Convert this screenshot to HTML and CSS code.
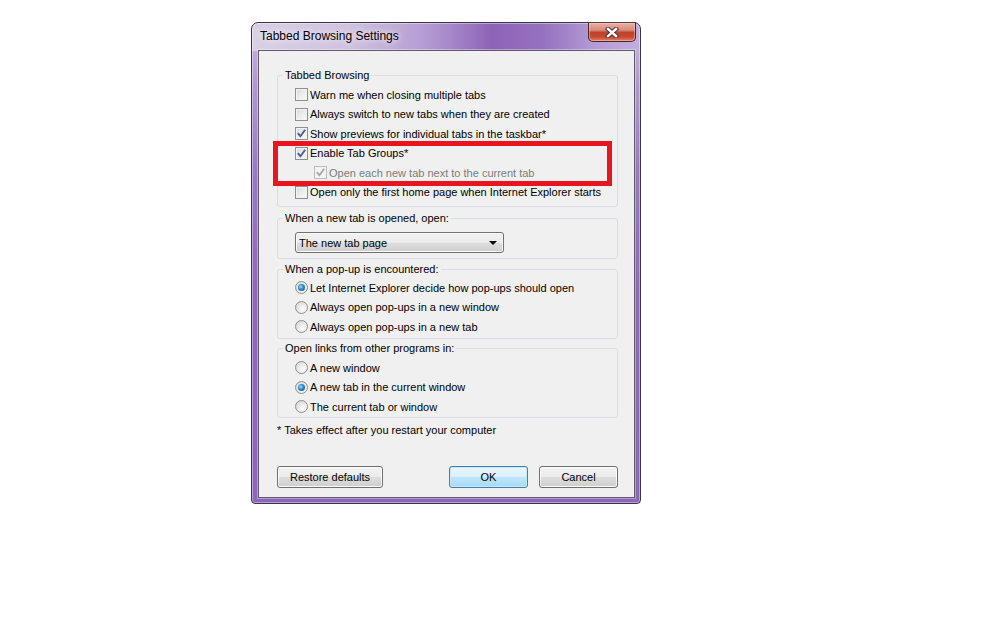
FILE: index.html
```html
<!DOCTYPE html>
<html lang="en">
<head>
    <meta charset="UTF-8">
    <meta name="viewport" content="width=device-width, initial-scale=1.0">
    <title>Tabbed Browsing Settings</title>
    <link rel="stylesheet" href="styles.css">
</head>
<body>
    <div class="window">
        <div class="titlebar">
            <span class="title">Tabbed Browsing Settings</span>
            <button class="close" aria-label="Close">
                <svg width="14" height="11" viewBox="0 0 14 11">
                    <path d="M3 2 L11 9 M11 2 L3 9" stroke="#4a3434" stroke-width="4.4" stroke-linecap="square"/>
                    <path d="M3 2 L11 9 M11 2 L3 9" stroke="#fff" stroke-width="2.4" stroke-linecap="square"/>
                </svg>
            </button>
        </div>

        <div class="client">
            <fieldset class="group group-tabs">
                <legend>Tabbed Browsing</legend>
                <div class="options">
                    <label class="option"><span class="check"></span>Warn me when closing multiple tabs</label>
                    <label class="option"><span class="check"></span>Always switch to new tabs when they are created</label>
                    <label class="option"><span class="check checked"><svg viewBox="0 0 11 11"><path d="M1.8 5.2 L4.4 8.2 L9.2 1.8"/></svg></span>Show previews for individual tabs in the taskbar*</label>
                    <div class="highlighted">
                        <label class="option"><span class="check checked"><svg viewBox="0 0 11 11"><path d="M1.8 5.2 L4.4 8.2 L9.2 1.8"/></svg></span>Enable Tab Groups*</label>
                        <label class="option sub disabled"><span class="check checked"><svg viewBox="0 0 11 11"><path d="M1.8 5.2 L4.4 8.2 L9.2 1.8"/></svg></span>Open each new tab next to the current tab</label>
                        <div class="redbox"></div>
                    </div>
                    <label class="option"><span class="check"></span>Open only the first home page when Internet Explorer starts</label>
                </div>
            </fieldset>

            <fieldset class="group group-newtab">
                <legend>When a new tab is opened, open:</legend>
                <div class="options">
                    <div class="select">
                        <span>The new tab page</span>
                        <span class="arrow"></span>
                    </div>
                </div>
            </fieldset>

            <fieldset class="group group-popup">
                <legend>When a pop-up is encountered:</legend>
                <div class="options">
                    <label class="option"><span class="radio selected"></span>Let Internet Explorer decide how pop-ups should open</label>
                    <label class="option"><span class="radio"></span>Always open pop-ups in a new window</label>
                    <label class="option"><span class="radio"></span>Always open pop-ups in a new tab</label>
                </div>
            </fieldset>

            <fieldset class="group group-links">
                <legend>Open links from other programs in:</legend>
                <div class="options">
                    <label class="option"><span class="radio"></span>A new window</label>
                    <label class="option"><span class="radio selected"></span>A new tab in the current window</label>
                    <label class="option"><span class="radio"></span>The current tab or window</label>
                </div>
            </fieldset>

            <p class="note">* Takes effect after you restart your computer</p>

            <div class="footer">
                <button class="btn btn-restore">Restore defaults</button>
                <div class="right-buttons">
                    <button class="btn btn-default">OK</button>
                    <button class="btn">Cancel</button>
                </div>
            </div>
        </div>
    </div>
</body>
</html>
```

FILE: styles.css
```css
body {
    margin: 0;
    padding: 22px 0 0 251px;
    background-color: #fff;
    font-family: 'Liberation Sans', Arial, sans-serif;
    font-size: 11px;
    color: #000;
}

.window {
    position: relative;
    box-sizing: border-box;
    width: 390px;
    height: 482px;
    display: flex;
    flex-direction: column;
    padding: 0 5px 5px 6px;
    border: 1px solid #3a3547;
    border-radius: 7px 7px 4px 4px;
    background:
        linear-gradient(to right, #d9d0e6 0%, #cfc2e0 25%, #b49bd2 45%, #8d63b8 62%, #9671c0 75%, #b49ad3 88%, #c3aee0 100%) top / 100% 28px no-repeat,
        linear-gradient(to bottom, #c9bbde 0%, #b39ad2 12%, #9a7ac4 30%, #8e6abb 55%, #8b66ba 100%);
    box-shadow: inset 0 0 0 1px rgba(255, 255, 255, 0.4);
}

.titlebar {
    height: 27px;
    display: flex;
    align-items: center;
}

.title {
    padding-left: 2px;
    font-size: 12px;
    line-height: 27px;
    text-shadow: 0 0 6px rgba(255, 255, 255, 0.9), 0 0 10px rgba(255, 255, 255, 0.6);
}

.close {
    position: absolute;
    top: -1px;
    right: 4px;
    width: 48px;
    height: 20px;
    padding: 0;
    display: flex;
    align-items: center;
    justify-content: center;
    border: 1px solid #4a2623;
    border-top-color: #5a3a3a;
    border-radius: 0 0 5px 5px;
    background: linear-gradient(to bottom, #e9b0a6 0%, #d88a7c 40%, #c0412c 52%, #c64a33 78%, #e0866c 100%);
    box-shadow: inset 0 0 0 1px rgba(255, 210, 200, 0.45);
}

.client {
    flex: 1;
    display: flex;
    flex-direction: column;
    box-sizing: border-box;
    padding: 17px 16px 9px 18px;
    border: 1px solid #5f5a6e;
    background-color: #f0f0f0;
    box-shadow: 0 0 0 1px rgba(255, 255, 255, 0.35);
}

.group {
    margin: 0;
    min-width: 0;
    padding: 0 5px;
    border: 1px solid #d5dfe5;
    border-radius: 3px;
}

.group legend {
    padding: 0 2px;
    line-height: 14px;
}

.group-tabs .options {
    padding: 3px 0 4px 12px;
}

.group-newtab {
    margin-top: 4px;
}

.group-newtab .options {
    padding: 7px 0 5px 12px;
}

.group-popup {
    margin-top: 3px;
}

.group-popup .options {
    padding: 2px 0 1.5px 12px;
}

.group-links {
    margin-top: 2px;
}

.group-links .options {
    padding: 3px 0 0.5px 12px;
}

.option {
    display: flex;
    align-items: center;
    gap: 2px;
    height: 19.5px;
    white-space: nowrap;
}

.option.sub {
    margin-left: 19px;
}

.option.disabled {
    color: #7c7c7c;
}

.check {
    box-sizing: border-box;
    width: 13px;
    height: 13px;
    flex: none;
    border: 1px solid #8e8f8f;
    background: linear-gradient(135deg, #d9d9d9 0%, #ececec 50%, #fbfbfb 100%);
    box-shadow: inset 0 0 0 1px #f2f2f2;
}

.check svg {
    display: block;
    width: 11px;
    height: 11px;
}

.check path {
    fill: none;
    stroke: #4a5f97;
    stroke-width: 1.9;
}

.disabled .check {
    border-color: #bcbcbc;
    background: #f4f4f4;
}

.disabled .check path {
    stroke: #a8a8a8;
}

.radio {
    box-sizing: border-box;
    width: 13px;
    height: 13px;
    flex: none;
    border: 1px solid #8e8f8f;
    border-radius: 50%;
    background: radial-gradient(circle at 65% 65%, #fcfcfc 0%, #e8e8e8 50%, #cfcfcf 100%);
    display: flex;
    align-items: center;
    justify-content: center;
}

.radio.selected::after {
    content: "";
    width: 7px;
    height: 7px;
    border-radius: 50%;
    background: radial-gradient(circle at 40% 40%, #a4e1fb 0%, #2b86c8 45%, #0f3f78 100%);
}

.highlighted {
    position: relative;
}

.redbox {
    position: absolute;
    top: -3px;
    bottom: -3px;
    left: -22px;
    right: 0;
    border: 5px solid #e8141e;
}

.select {
    box-sizing: border-box;
    width: 209px;
    height: 21px;
    display: flex;
    align-items: center;
    justify-content: space-between;
    padding: 0 6px 0 3px;
    border: 1px solid #707070;
    border-radius: 3px;
    background: linear-gradient(to bottom, #f2f2f2 0%, #ebebeb 50%, #dddddd 51%, #cfcfcf 100%);
    box-shadow: inset 0 0 0 1px #fbfbfb;
}

.arrow {
    width: 0;
    height: 0;
    border-left: 4px solid transparent;
    border-right: 4px solid transparent;
    border-top: 4px solid #000;
}

.note {
    margin: 5px 0 0 0;
    line-height: 14px;
}

.footer {
    margin-top: auto;
    display: flex;
    justify-content: space-between;
}

.right-buttons {
    display: flex;
    gap: 11px;
}

.btn {
    box-sizing: border-box;
    width: 79px;
    height: 22px;
    padding: 0;
    font-family: inherit;
    font-size: 11px;
    color: #000;
    border: 1px solid #707070;
    border-radius: 3px;
    background: linear-gradient(to bottom, #f2f2f2 0%, #ebebeb 50%, #dddddd 51%, #cfcfcf 100%);
    box-shadow: inset 0 0 0 1px #fbfbfb;
}

.btn-restore {
    width: 106px;
}

.btn-default {
    border-color: #3c7fb1;
    background: linear-gradient(to bottom, #eaf6fd 0%, #d9f0fc 50%, #bee6fd 51%, #a7d9f5 100%);
    box-shadow: inset 0 0 0 1px #c8e9fb;
}
```
